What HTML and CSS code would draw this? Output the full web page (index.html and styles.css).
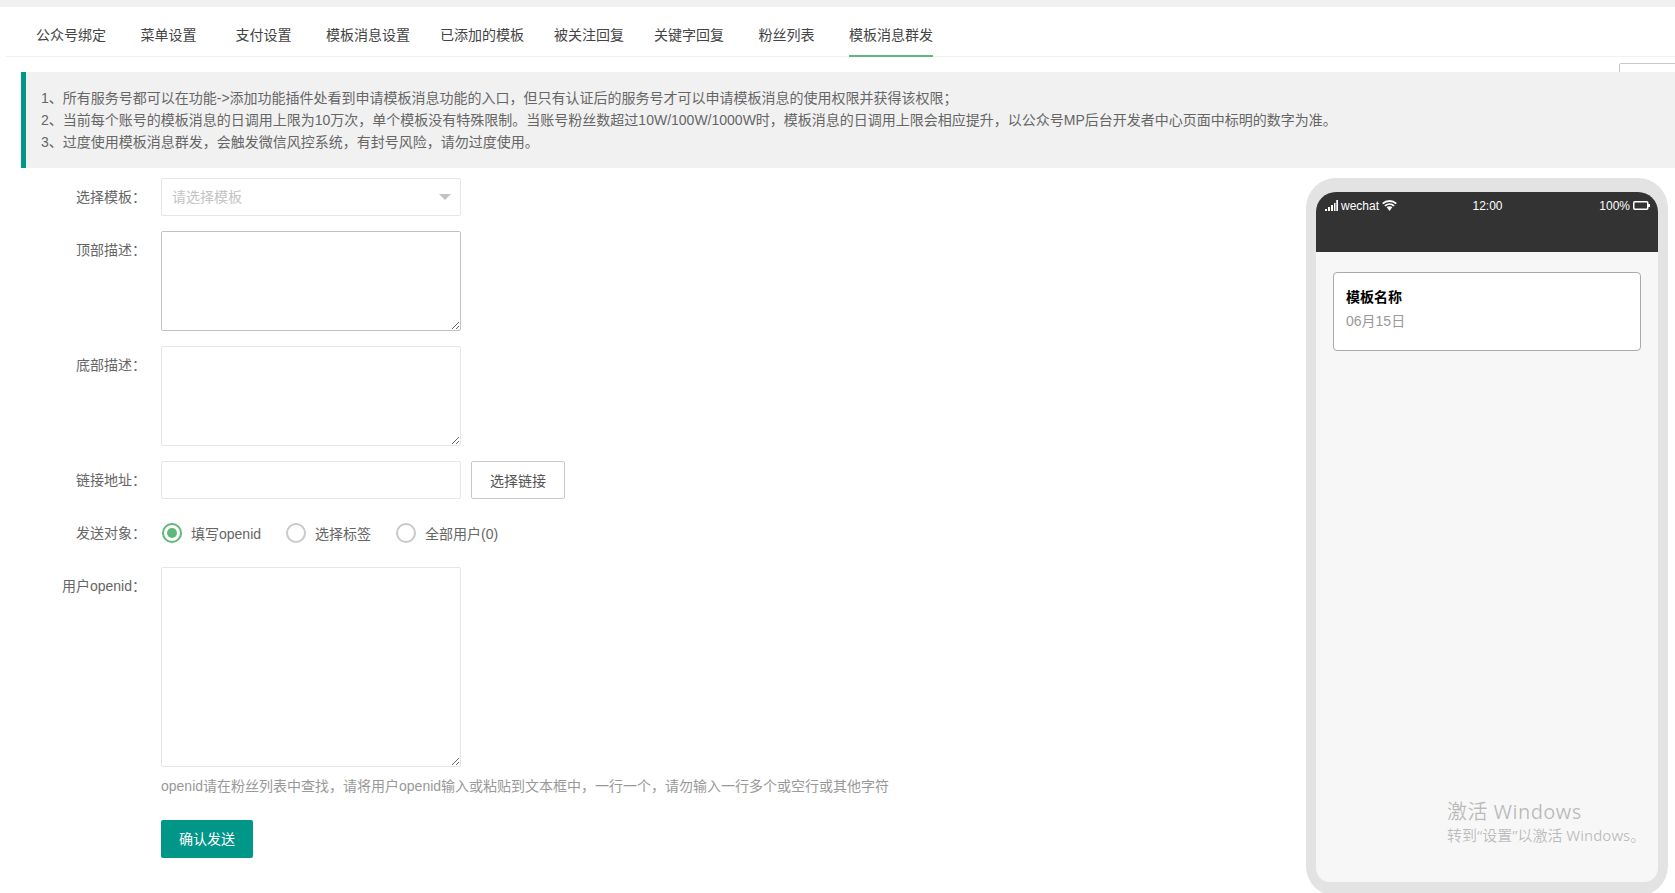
FILE: index.html
```html
<!DOCTYPE html>
<html lang="zh-CN">
<head>
<meta charset="utf-8">
<title>模板消息群发</title>
<link rel="stylesheet" href="styles.css">
</head>
<body>
<div class="page">
  <div class="topbar"></div>
  <nav class="tabs">
    <ul class="tab-list">
      <li class="tab"><span class="tab-text">公众号绑定</span></li>
      <li class="tab"><span class="tab-text">菜单设置</span></li>
      <li class="tab"><span class="tab-text">支付设置</span></li>
      <li class="tab"><span class="tab-text">模板消息设置</span></li>
      <li class="tab"><span class="tab-text">已添加的模板</span></li>
      <li class="tab"><span class="tab-text">被关注回复</span></li>
      <li class="tab"><span class="tab-text">关键字回复</span></li>
      <li class="tab"><span class="tab-text">粉丝列表</span></li>
      <li class="tab active"><span class="tab-text">模板消息群发</span></li>
    </ul>
  </nav>
  <div class="ghost-box"></div>
  <section class="notice">
    <p>1、所有服务号都可以在功能-&gt;添加功能插件处看到申请模板消息功能的入口，但只有认证后的服务号才可以申请模板消息的使用权限并获得该权限；</p>
    <p>2、当前每个账号的模板消息的日调用上限为10万次，单个模板没有特殊限制。当账号粉丝数超过10W/100W/1000W时，模板消息的日调用上限会相应提升，以公众号MP后台开发者中心页面中标明的数字为准。</p>
    <p>3、过度使用模板消息群发，会触发微信风控系统，有封号风险，请勿过度使用。</p>
  </section>
  <main class="main">
    <form class="form">
      <div class="row">
        <label class="label">选择模板：</label>
        <div class="select"><span class="placeholder">请选择模板</span><i class="caret"></i></div>
      </div>
      <div class="row">
        <label class="label">顶部描述：</label>
        <textarea class="area area-focus"></textarea>
      </div>
      <div class="row">
        <label class="label">底部描述：</label>
        <textarea class="area"></textarea>
      </div>
      <div class="row">
        <label class="label">链接地址：</label>
        <input class="input" type="text">
        <button class="btn-plain" type="button">选择链接</button>
      </div>
      <div class="row">
        <label class="label">发送对象：</label>
        <div class="radios">
          <span class="radio checked"><i class="dot"></i>填写openid</span>
          <span class="radio"><i class="dot"></i>选择标签</span>
          <span class="radio"><i class="dot"></i>全部用户(0)</span>
        </div>
      </div>
      <div class="row row-tight">
        <label class="label">用户openid：</label>
        <textarea class="area area-tall"></textarea>
      </div>
      <p class="help">openid请在粉丝列表中查找，请将用户openid输入或粘贴到文本框中，一行一个，请勿输入一行多个或空行或其他字符</p>
      <button class="btn-primary" type="button">确认发送</button>
    </form>
    <aside class="phone">
      <div class="phone-head">
        <div class="status">
          <div class="status-left">
            <svg class="signal" width="13" height="11" viewBox="0 0 13 11"><path fill="#fff" d="M0 9h2v2H0zM3 7h2v4H3zM6 5h2v6H6zM9 3h1.500v8H9zM11.300 0H13v11h-1.700z"/></svg>
            <span>wechat</span>
            <svg class="wifi" width="15" height="11" viewBox="0 0 15 11"><path fill="none" stroke="#fff" stroke-width="1.800" d="M.7 3.700C4.500.1 10.500.1 14.300 3.700M2.900 5.900c2.700-2.300 6.500-2.300 9.200 0"/><path fill="#fff" d="M4.600 7.100c1.800-1.200 4-1.200 5.800 0L7.500 11z"/></svg>
          </div>
          <div class="status-mid">12:00</div>
          <div class="status-right">
            <span>100%</span>
            <svg class="battery" width="17" height="9" viewBox="0 0 17 9"><rect x=".75" y=".75" width="14" height="7.500" rx="1" fill="none" stroke="#fff" stroke-width="1.500"/><path fill="#fff" d="M15 3h2v3h-2z"/></svg>
          </div>
        </div>
      </div>
      <div class="phone-body">
        <div class="msg-card">
          <div class="msg-title">模板名称</div>
          <div class="msg-date">06月15日</div>
        </div>
      </div>
    </aside>
  </main>
  <div class="watermark">
    <div class="wm-title">激活 Windows</div>
    <div class="wm-sub">转到“设置”以激活 Windows。</div>
  </div>
</div>
</body>
</html>
```
FILE: styles.css
```css
* { box-sizing: border-box; }
html, body { margin: 0; padding: 0; height: 100%; overflow: hidden; background: #fff; }
body {
  font-family: "Liberation Sans", "Noto Sans CJK SC", sans-serif;
  font-size: 14px;
  color: #666;
}
.page { position: relative; height: 893px; overflow: hidden; }
.topbar { height: 7px; background: #f1f1f1; }

.tabs { margin-left: 6px; padding: 18px 0 0 15px; border-bottom: 1px solid #f1f1f1; height: 50px; }
.tab-list { display: flex; list-style: none; margin: 0; padding: 0; }
.tab { min-width: 95px; padding: 0 15px; text-align: center; color: #444; line-height: 20px; }
.tab-text { display: block; padding-bottom: 10px; border-bottom: 2px solid transparent; }
.tab.active .tab-text { border-bottom-color: #5fb878; }

.ghost-box {
  position: absolute; top: 63px; left: 1619px; width: 80px; height: 20px;
  border: 1px solid #c9c9c9; border-radius: 2px;
}
.notice {
  position: relative;
  margin: 15px 0 0 21px;
  padding: 15px;
  background: #f1f1f1;
  border-left: 5px solid #009688;
  line-height: 22px;
  color: #666;
}
.notice p { margin: 0; }

.main { display: flex; justify-content: space-between; align-items: flex-start; padding: 10px 7px 0 21px; }
.form { width: 900px; }
.row { display: flex; align-items: flex-start; margin-bottom: 15px; }
.row-tight { margin-bottom: 9px; }
.label { width: 140px; padding-right: 15px; text-align: right; line-height: 38px; color: #666; flex: none; white-space: nowrap; }
.select {
  width: 300px; height: 38px; border: 1px solid #e6e6e6; border-radius: 2px;
  display: flex; align-items: center; justify-content: space-between; padding: 0 9px 0 10px;
}
.placeholder { color: #c4c4c4; padding-bottom: 2px; }
.caret { width: 0; height: 0; border: 6px solid transparent; border-top-color: #c2c2c2; border-bottom-width: 0; display: block; }
.area {
  display: block; width: 300px; height: 100px; margin: 0; padding: 6px 10px;
  border: 1px solid #e6e6e6; border-radius: 2px; background: #fff;
  font: inherit; outline: none;
}
.area-focus { border-color: #c2c2c2; }
.area-tall { height: 200px; }
.input {
  display: block; width: 300px; height: 38px; padding: 0 10px; margin: 0;
  border: 1px solid #e6e6e6; border-radius: 2px; font: inherit; outline: none;
}
.btn-plain {
  margin-left: 10px; height: 38px; padding: 0 18px; background: #fff;
  border: 1px solid #c9c9c9; border-radius: 2px; font: inherit; color: #555;
}
.radios { display: flex; height: 38px; align-items: center; color: #666; }
.radio { display: flex; align-items: center; margin-right: 24px; }
.dot {
  width: 20px; height: 20px; border-radius: 50%; border: 2px solid #c9c9c9;
  margin: 0 9px 0 1px; display: block; position: relative; background: #fff;
}
.radio.checked .dot { border-color: #5fb878; }
.radio.checked .dot::after {
  content: ""; position: absolute; left: 3px; top: 3px; width: 10px; height: 10px;
  border-radius: 50%; background: #5fb878;
}
.help { margin: 0 0 24px 140px; line-height: 20px; color: #999; white-space: nowrap; }
.btn-primary {
  display: block; margin-left: 140px; width: 92px; height: 38px; padding: 0 0 2px;
  background: #009688; color: #fff; border: 0; border-radius: 2px; font: inherit;
}

.phone {
  flex: none; width: 362px; height: 718px;
  padding: 14px 10px; background: #e3e3e3; border-radius: 30px;
  display: flex; flex-direction: column;
}
.phone-head { height: 60px; background: #333; border-radius: 20px 20px 0 0; flex: none; color: #fff; font-size: 12px; }
.status { display: flex; align-items: center; height: 27px; padding: 0 8px 0 9px; }
.status-left, .status-right { flex: 1; display: flex; align-items: center; }
.status-left { gap: 3px; }
.status-right { justify-content: flex-end; gap: 3px; }
.signal, .wifi, .battery { display: block; flex: none; }
.phone-body { flex: 1; background: #f7f7f7; border-radius: 0 0 14px 14px; padding: 20px 17px; }
.msg-card {
  height: 79px; background: #fff; border: 1px solid #aaa; border-radius: 4px; padding: 12px;
}
.msg-title { font-weight: bold; color: #000; line-height: 24px; }
.msg-date { color: #999; line-height: 24px; }

.watermark { position: absolute; left: 1447px; top: 798px; color: rgba(0, 0, 0, .25); font-family: "Open Sans", "Noto Sans CJK SC", sans-serif; white-space: nowrap; }
.wm-title { font-size: 20px; line-height: 28px; letter-spacing: .45px; }
.wm-sub { font-size: 15px; line-height: 19px; }
```
